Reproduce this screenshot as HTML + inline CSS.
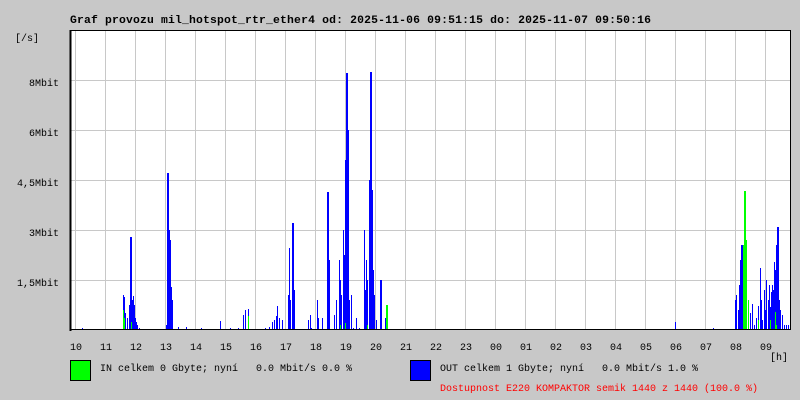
<!DOCTYPE html>
<html><head><meta charset="utf-8"><style>
html,body{margin:0;padding:0;background:#c8c8c8;}
svg{display:block}
text{font-family:"Liberation Mono","DejaVu Sans Mono",monospace;font-size:10px;fill:#000;white-space:pre}
</style></head><body>
<svg width="800" height="400" xmlns="http://www.w3.org/2000/svg" shape-rendering="crispEdges" xml:space="preserve">
<rect width="800" height="400" fill="#c8c8c8"/>
<text x="70" y="23" textLength="581" style="font-size:11.4px;font-weight:bold">Graf provozu mil_hotspot_rtr_ether4 od: 2025-11-06 09:51:15 do: 2025-11-07 09:50:16</text>
<text x="15" y="41">[/s]</text>
<rect x="70" y="30" width="721" height="300" fill="#fff"/>
<g stroke="#c8c8c8" stroke-width="1">
<path d="M75.5,30V330M105.5,30V330M135.5,30V330M165.5,30V330M195.5,30V330M225.5,30V330M255.5,30V330M285.5,30V330M315.5,30V330M345.5,30V330M375.5,30V330M405.5,30V330M435.5,30V330M465.5,30V330M495.5,30V330M525.5,30V330M555.5,30V330M585.5,30V330M615.5,30V330M645.5,30V330M675.5,30V330M705.5,30V330M735.5,30V330M765.5,30V330"/>
<path d="M70,80.5H791M70,130.5H791M70,180.5H791M70,230.5H791M70,280.5H791"/>
</g>
<g text-anchor="end">
<text x="59" y="86">8Mbit</text><text x="59" y="136">6Mbit</text><text x="59" y="186">4,5Mbit</text><text x="59" y="236">3Mbit</text><text x="59" y="286">1,5Mbit</text>
</g>
<path stroke="#0000ff" stroke-width="1" fill="none" d="M82.5,330V328M123.5,330V295M124.5,330V297M125.5,330V313M127.5,330V318M129.5,330V305M130.5,330V237M131.5,330V237M132.5,330V300M133.5,330V296M134.5,330V305M135.5,330V318M136.5,330V322M137.5,330V325M139.5,330V328M166.5,330V325M167.5,330V173M168.5,330V173M169.5,330V230M170.5,330V240M171.5,330V287M172.5,330V300M178.5,330V327M186.5,330V327M201.5,330V328M220.5,330V321M230.5,330V328M238.5,330V328M243.5,330V315M245.5,330V310M248.5,330V309M265.5,330V328M269.5,330V327M272.5,330V322M274.5,330V320M276.5,330V316M277.5,330V306M279.5,330V318M282.5,330V320M288.5,330V295M289.5,330V248M290.5,330V300M292.5,330V223M293.5,330V223M294.5,330V290M308.5,330V320M310.5,330V315M311.5,330V328M317.5,330V300M318.5,330V318M322.5,330V318M327.5,330V192M328.5,330V192M329.5,330V260M334.5,330V315M336.5,330V300M339.5,330V260M340.5,330V280M341.5,330V295M343.5,330V230M344.5,330V255M345.5,330V160M346.5,330V73M347.5,330V73M348.5,330V130M349.5,330V300M351.5,330V295M353.5,330V328M356.5,330V318M359.5,330V328M364.5,330V230M365.5,330V290M366.5,330V260M367.5,330V280M369.5,330V180M370.5,330V72M371.5,330V72M372.5,330V190M373.5,330V270M374.5,330V295M376.5,330V320M380.5,330V280M381.5,330V280M385.5,330V318M675.5,330V322M713.5,330V328M735.5,330V300M736.5,330V295M738.5,330V310M739.5,330V285M740.5,330V260M741.5,330V245M742.5,330V245M743.5,330V290M744.5,330V310M746.5,330V300M748.5,330V320M750.5,330V313M752.5,330V304M754.5,330V325M756.5,330V318M758.5,330V306M760.5,330V268M761.5,330V300M762.5,330V320M764.5,330V290M765.5,330V310M766.5,330V280M768.5,330V300M769.5,330V285M770.5,330V307M771.5,330V292M772.5,330V285M773.5,330V290M774.5,330V262M775.5,330V270M776.5,330V245M777.5,330V227M778.5,330V227M779.5,330V300M780.5,330V310M782.5,330V315M784.5,330V325M786.5,330V325M788.5,330V325"/>
<path stroke="#00ff00" stroke-width="1" fill="none" d="M123.5,330V310M124.5,330V318M131.5,330V322M248.5,330V316M340.5,330V325M345.5,330V323M367.5,330V325M386.5,330V305M387.5,330V305M743.5,330V245M744.5,330V191M745.5,330V191M746.5,330V240M748.5,330V300M758.5,330V320M770.5,330V320M775.5,330V312M776.5,330V325"/>
<rect x="70.5" y="30.5" width="720" height="299" fill="none" stroke="#000"/>
<line x1="70.5" y1="30" x2="70.5" y2="331" stroke="#000" stroke-width="2"/>
<g>
<text x="70" y="350">10</text><text x="100" y="350">11</text><text x="130" y="350">12</text><text x="160" y="350">13</text><text x="190" y="350">14</text><text x="220" y="350">15</text><text x="250" y="350">16</text><text x="280" y="350">17</text><text x="310" y="350">18</text><text x="340" y="350">19</text><text x="370" y="350">20</text><text x="400" y="350">21</text><text x="430" y="350">22</text><text x="460" y="350">23</text><text x="490" y="350">00</text><text x="520" y="350">01</text><text x="550" y="350">02</text><text x="580" y="350">03</text><text x="610" y="350">04</text><text x="640" y="350">05</text><text x="670" y="350">06</text><text x="700" y="350">07</text><text x="730" y="350">08</text><text x="760" y="350">09</text>
<text x="770" y="360">[h]</text>
</g>
<rect x="70.5" y="360.5" width="20" height="20" fill="#00ff00" stroke="#000"/>
<text x="100" y="371">IN celkem 0 Gbyte; nyní   0.0 Mbit/s 0.0 %</text>
<rect x="410.5" y="360.5" width="20" height="20" fill="#0000ff" stroke="#000"/>
<text x="440" y="371">OUT celkem 1 Gbyte; nyní   0.0 Mbit/s 1.0 %</text>
<text x="440" y="391" style="fill:#ff0000">Dostupnost E220 KOMPAKTOR semik 1440 z 1440 (100.0 %)</text>
</svg>
</body></html>
